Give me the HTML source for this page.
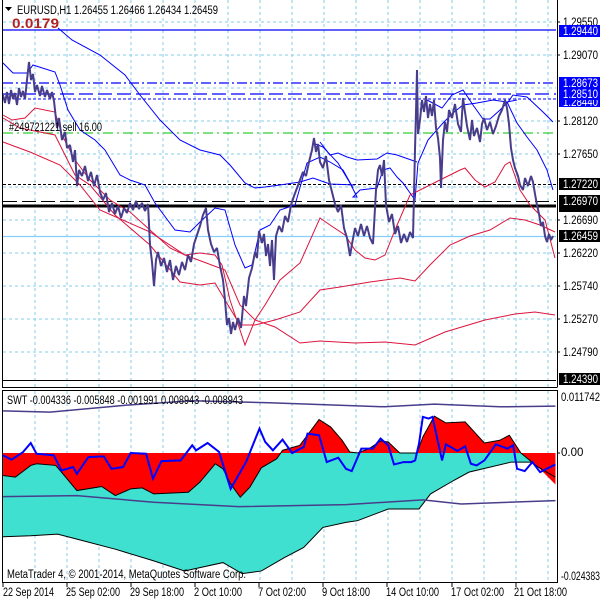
<!DOCTYPE html>
<html><head><meta charset="utf-8"><style>
html,body{margin:0;padding:0;background:#fff;width:600px;height:600px;overflow:hidden}
svg{display:block}
text{font-family:"Liberation Sans",sans-serif;font-size:11.5px}
</style></head><body>
<svg width="600" height="600" viewBox="0 0 600 600" xmlns="http://www.w3.org/2000/svg">
<rect width="600" height="600" fill="#fff"/>
<g stroke="#87CEEB" stroke-width="1" stroke-dasharray="3,3" fill="none">
<path d="M35 0V387M67 0V387M99 0V387M131 0V387M163 0V387M195 0V387M228 0V387M260 0V387M292 0V387M324 0V387M356 0V387M388 0V387M420 0V387M452 0V387M484 0V387M516 0V387M548 0V387"/>
<path d="M3 22H556M3 55H556M3 88H556M3 121H556M3 154H556M3 187H556M3 220H556M3 253H556M3 286H556M3 319H556M3 352H556"/>
<path d="M35 391V582M67 391V582M99 391V582M131 391V582M163 391V582M195 391V582M228 391V582M260 391V582M292 391V582M324 391V582M356 391V582M388 391V582M420 391V582M452 391V582M484 391V582M516 391V582M548 391V582"/>
</g>
<path d="M3 30H556" stroke="#0000ff" stroke-width="1.3"/>
<path d="M3 83H556" stroke="#0000ff" stroke-width="1.3" stroke-dasharray="10,3,2,3"/>
<path d="M3 94H556" stroke="#0000ff" stroke-width="1.3" stroke-dasharray="14,5"/>
<path d="M3 99H556" stroke="#0000ff" stroke-width="1" stroke-dasharray="3,2"/>
<path d="M3 133H556" stroke="#32CD32" stroke-width="1.2" stroke-dasharray="10,4,2,4"/>
<path d="M3 184.5H556" stroke="#000" stroke-width="1" stroke-dasharray="3,2"/>
<path d="M3 201.5H556" stroke="#000" stroke-width="1" stroke-dasharray="14,5"/>
<path d="M3 206H556" stroke="#000" stroke-width="3"/>
<path d="M3 236.5H556" stroke="#87CEFA" stroke-width="1.2"/>
<path d="M3 380.5H556" stroke="#000" stroke-width="1"/>
<g fill="none" stroke="#0000ff" stroke-width="1">
<polyline points="58,28 72,40 100,55 125,75 140,95 160,120 180,140 200,150 220,155 230,165 245,183 255,188 265,187 280,185 300,182 313,178 330,184 355,185"/>
<polyline points="3,63 13,73 27,73 33,65 55,72 60,85 68,110 80,130 95,140 105,150 120,175 130,180 145,185 155,203 175,230 190,232 200,222 215,208 225,210 235,245 245,268 252,265 260,230 270,225 280,210 295,205 307,163 320,157 330,162 343,170 353,188"/>
<polyline points="313,143 323,147 338,163 350,183 357,197 353,197 360,190 377,188 383,170 390,168 397,177 403,183 415,200 418,163 428,140 443,123 453,113 463,105 477,103 493,100 507,102 517,100"/>
<polyline points="320,142 330,155 338,153 347,157 357,160 377,159 387,153 397,155 417,162"/>
<polyline points="427,100 442,108 452,95 463,90 473,105 483,119 490,119 500,110 508,102 513,95 527,97 543,112 553,122"/>
<polyline points="507,102 517,123 527,137 537,150 547,170 553,190"/>
</g>
<g fill="none" stroke="#DC143C" stroke-width="1">
<polyline points="3,115 12,120 25,118 35,108 55,112 62,135 75,160 90,180 110,200 130,212 150,230 170,248 185,255 200,253 215,255 222,265 230,300 240,330 245,345 255,320 265,305 280,280 300,263 320,218 330,225 345,235 355,250 365,258 375,260 385,255 395,230 410,195 430,185 440,180 460,170 465,168 475,180 485,187 495,182 505,165 510,162 520,190 530,205 545,220 555,258"/>
<polyline points="3,118 20,128 55,135 75,175 90,185 115,215 150,245 180,282 200,285 215,283 225,300 240,325 255,325 275,320 300,312 320,290 340,287 370,282 400,278 415,281 430,265 450,245 470,236 490,230 510,218 525,220 540,225 555,232"/>
<polyline points="3,142 30,152 60,165 80,185 100,210 150,232 185,255 225,270 240,305 255,320 275,327 300,343 320,341 355,343 385,342 415,345 445,332 485,320 515,314 535,312 555,315"/>
</g>
<polyline fill="none" stroke="#483D8B" stroke-width="2" stroke-linejoin="bevel" points="3,95 5,103 7,92 9,104 11,90 13,99 15,93 17,105 19,88 21,97 23,91 25,99 27,80 29,62 31,80 33,74 35,92 37,85 40,96 42,86 45,97 47,90 50,99 52,92 54,101 57,128 59,118 62,140 65,132 67,148 70,145 73,162 75,150 77,186 79,170 82,176 85,166 88,181 91,172 94,186 97,175 100,192 103,200 106,193 109,212 112,203 115,214 118,206 121,218 124,208 127,213 130,203 133,210 136,201 139,209 142,203 145,211 148,204 150,245 152,262 154,286 156,260 158,252 161,266 164,258 167,272 170,260 173,280 176,266 179,275 182,262 185,270 188,255 191,262 194,244 197,235 200,226 203,215 206,208 208,230 211,244 214,252 217,248 220,266 223,280 225,300 227,325 229,318 231,334 233,322 235,330 238,318 241,328 244,296 246,306 249,278 252,268 255,252 257,258 259,231 262,243 264,234 266,256 268,244 270,266 272,240 274,280 276,236 279,226 282,232 285,216 288,222 291,205 294,196 297,188 300,180 303,172 306,176 309,162 312,150 314,138 316,152 318,144 320,162 323,168 326,156 329,180 332,192 335,204 338,212 341,205 344,228 347,238 350,256 352,244 355,228 358,236 361,224 364,236 367,226 370,238 373,244 376,190 378,170 380,165 382,176 384,160 386,205 389,222 392,214 395,234 398,226 401,243 404,234 407,242 410,232 413,238 415,150 416,112 417,70 418,134 420,120 422,100 424,112 426,96 428,118 430,104 432,116 434,100 436,128 438,138 440,158 441,188 443,140 445,122 447,132 449,110 452,118 455,104 458,124 461,132 463,98 465,112 467,126 470,140 472,120 474,136 477,128 480,142 482,124 484,118 487,130 490,122 493,134 496,126 499,116 502,110 505,100 507,108 509,124 511,148 513,160 515,168 518,176 520,185 523,190 525,178 528,186 531,176 533,182 535,194 537,205 539,214 541,226 543,222 545,236 547,242 549,234 551,240 553,236"/>
<path d="M2.5 0V387.5H557.5M557.5 0V387" stroke="#000" fill="none"/>
<rect x="2.5" y="390.5" width="555" height="192" fill="none" stroke="#000"/>
<path d="M557 22h3M557 55h3M557 121h3M557 154h3M557 220h3M557 253h3M557 286h3M557 319h3M557 352h3" stroke="#000"/>
<path d="M5 7l3.5 4 3.5-4z" fill="#000"/>
<text x="17" y="14" textLength="201" lengthAdjust="spacingAndGlyphs">EURUSD,H1  1.26455 1.26466 1.26434 1.26459</text>
<text x="12" y="28" style="font-size:14px;font-weight:bold;fill:#b22222" textLength="47" lengthAdjust="spacingAndGlyphs">0.0179</text>
<text x="9" y="131" textLength="93" lengthAdjust="spacingAndGlyphs">#249721221 sell 16.00</text>
<g>
<text x="563" y="26" textLength="35" lengthAdjust="spacingAndGlyphs">1.29550</text>
<rect x="559" y="25" width="41" height="12" fill="#0000ff"/><text x="563" y="35" fill="#fff" textLength="35" lengthAdjust="spacingAndGlyphs">1.29440</text>
<text x="563" y="59" textLength="35" lengthAdjust="spacingAndGlyphs">1.29070</text>
<rect x="559" y="99" width="41" height="8" fill="#0000ff"/><text x="563" y="106" fill="#fff" textLength="35" lengthAdjust="spacingAndGlyphs">1.28440</text>
<rect x="559" y="77" width="41" height="12" fill="#0000ff"/><text x="563" y="87" fill="#fff" textLength="35" lengthAdjust="spacingAndGlyphs">1.28673</text>
<rect x="559" y="89" width="41" height="11" fill="#0000ff"/><text x="563" y="98" fill="#fff" textLength="35" lengthAdjust="spacingAndGlyphs">1.28510</text>
<text x="563" y="125" textLength="35" lengthAdjust="spacingAndGlyphs">1.28120</text>
<text x="563" y="158" textLength="35" lengthAdjust="spacingAndGlyphs">1.27650</text>
<rect x="559" y="178" width="41" height="12" fill="#000"/><text x="563" y="188" fill="#fff" textLength="35" lengthAdjust="spacingAndGlyphs">1.27220</text>
<rect x="559" y="206" width="41" height="6" fill="#000"/>
<rect x="559" y="195" width="41" height="12" fill="#000"/><text x="563" y="205" fill="#fff" textLength="35" lengthAdjust="spacingAndGlyphs">1.26970</text>
<text x="563" y="224" textLength="35" lengthAdjust="spacingAndGlyphs">1.26690</text>
<rect x="559" y="230" width="41" height="12" fill="#000"/><text x="563" y="240" fill="#fff" textLength="35" lengthAdjust="spacingAndGlyphs">1.26459</text>
<text x="563" y="257" textLength="35" lengthAdjust="spacingAndGlyphs">1.26220</text>
<text x="563" y="290" textLength="35" lengthAdjust="spacingAndGlyphs">1.25740</text>
<text x="563" y="323" textLength="35" lengthAdjust="spacingAndGlyphs">1.25270</text>
<text x="563" y="356" textLength="35" lengthAdjust="spacingAndGlyphs">1.24790</text>
<rect x="559" y="373" width="41" height="12" fill="#000"/><text x="563" y="383" fill="#fff" textLength="35" lengthAdjust="spacingAndGlyphs">1.24390</text>
</g>
<g transform="translate(0,380) scale(0.3844,0.335)">
<polygon fill="#40E0D0" points="8,218 1445,218 1445,285 1380,245 1330,245 1220,275 1180,300 1120,340 1090,385 1010,385 930,420 900,425 840,440 790,500 740,530 680,570 630,578 580,545 480,570 400,540 300,505 200,475 150,460 80,465 8,468"/>
<polyline fill="none" stroke="#000" stroke-width="1" vector-effect="non-scaling-stroke" points="1445,285 1380,245 1330,245 1220,275 1180,300 1120,340 1090,385 1010,385 930,420 900,425 840,440 790,500 740,530 680,570 630,578 580,545 480,570 400,540 300,505 200,475 150,460 80,465 8,468"/>
<polygon fill="#ff0000" points="8,218 8,285 40,290 80,255 95,250 145,255 160,275 200,330 265,318 300,345 340,325 370,322 400,340 490,335 520,305 560,250 580,265 600,310 625,350 650,320 680,262 720,235 735,210 780,195 830,118 860,140 890,180 910,215 930,218 960,205 990,182 1010,185 1040,218 1085,218 1100,170 1130,108 1160,128 1210,125 1260,188 1300,180 1325,165 1355,218 1400,260 1445,312 1445,218"/>
<polyline fill="none" stroke="#000" stroke-width="1" vector-effect="non-scaling-stroke" points="8,285 40,290 80,255 95,250 145,255 160,275 200,330 265,318 300,345 340,325 370,322 400,340 490,335 520,305 560,250 580,265 600,310 625,350 650,320 680,262 720,235 735,210 780,195 830,118 860,140 890,180 910,215 930,218 960,205 990,182 1010,185 1040,218 1085,218 1100,170 1130,108 1160,128 1210,125 1260,188 1300,180 1325,165 1355,218 1400,260 1445,290"/>
<polyline fill="none" stroke="#483D8B" stroke-width="1.5" vector-effect="non-scaling-stroke" points="8,92 130,96 330,75 500,62 700,68 1000,80 1130,72 1300,80 1445,78"/>
<polyline fill="none" stroke="#483D8B" stroke-width="1.5" vector-effect="non-scaling-stroke" points="8,348 200,345 400,365 620,378 900,372 1100,358 1200,370 1445,360"/>
<polyline fill="none" stroke="#0000ff" stroke-width="2" vector-effect="non-scaling-stroke" points="8,225 30,238 60,215 80,188 95,220 140,225 160,270 190,260 200,280 230,230 270,228 290,265 320,260 340,218 380,220 398,295 420,242 470,240 500,195 510,210 540,188 570,215 600,325 640,245 675,145 690,185 710,210 735,178 760,218 790,200 800,160 830,165 850,245 880,232 900,265 915,272 940,205 970,205 990,175 1010,195 1025,252 1050,245 1070,245 1080,240 1090,190 1100,110 1115,115 1125,110 1150,240 1160,192 1190,212 1210,198 1225,250 1240,255 1260,240 1290,192 1320,205 1335,195 1345,265 1365,272 1385,245 1405,275 1445,252"/>
</g>
<text x="7" y="404" textLength="236" lengthAdjust="spacingAndGlyphs">SWT -0.004336 -0.005848 -0.001991 0.008943 -0.008943</text>
<text x="7" y="578" textLength="239" lengthAdjust="spacingAndGlyphs">MetaTrader 4, © 2001-2014, MetaQuotes Software Corp.</text>
<text x="561" y="401" textLength="39" lengthAdjust="spacingAndGlyphs">0.011742</text>
<text x="561" y="456">0.00</text>
<text x="561" y="580" textLength="39" lengthAdjust="spacingAndGlyphs">-0.024383</text>
<path d="M557 453h3" stroke="#000"/>
<path d="M3 583v4M67 583v4M131 583v4M195 583v4M259 583v4M323 583v4M387 583v4M452 583v4M516 583v4" stroke="#000"/>
<text x="3" y="596" textLength="51" lengthAdjust="spacingAndGlyphs">22 Sep 2014</text>
<text x="66" y="596" textLength="54" lengthAdjust="spacingAndGlyphs">25 Sep 02:00</text>
<text x="130" y="596" textLength="54" lengthAdjust="spacingAndGlyphs">29 Sep 18:00</text>
<text x="194" y="596" textLength="48" lengthAdjust="spacingAndGlyphs">2 Oct 10:00</text>
<text x="258" y="596" textLength="48" lengthAdjust="spacingAndGlyphs">7 Oct 02:00</text>
<text x="322" y="596" textLength="48" lengthAdjust="spacingAndGlyphs">9 Oct 18:00</text>
<text x="386" y="596" textLength="53" lengthAdjust="spacingAndGlyphs">14 Oct 10:00</text>
<text x="451" y="596" textLength="53" lengthAdjust="spacingAndGlyphs">17 Oct 02:00</text>
<text x="514" y="596" textLength="53" lengthAdjust="spacingAndGlyphs">21 Oct 18:00</text>
</svg>
</body></html>
